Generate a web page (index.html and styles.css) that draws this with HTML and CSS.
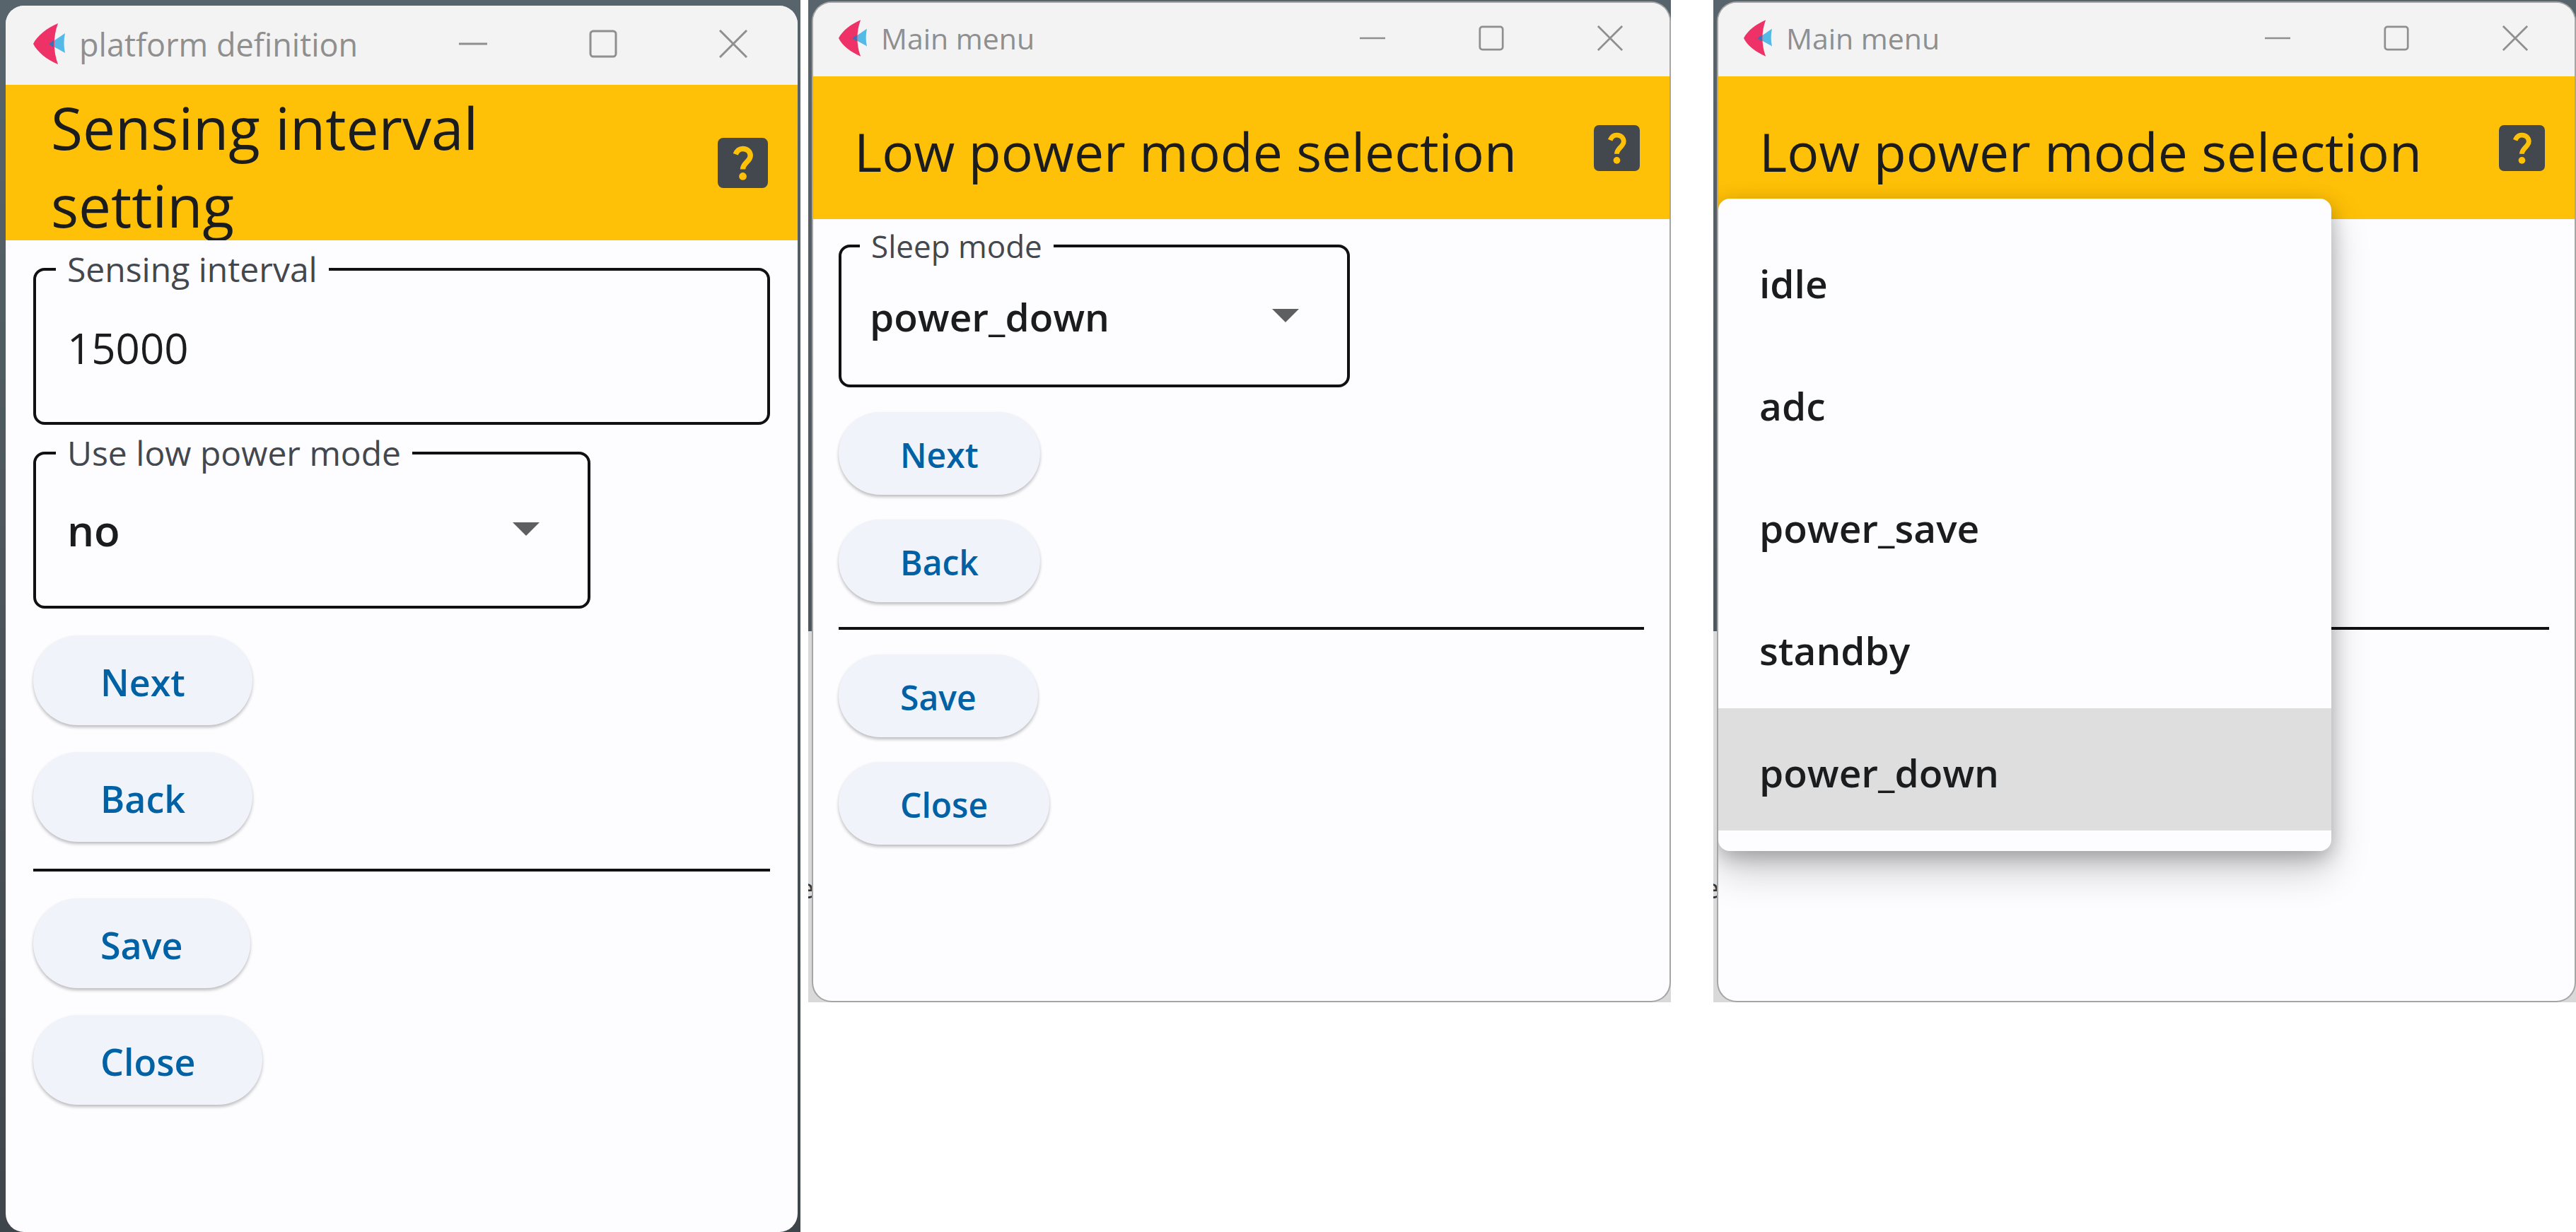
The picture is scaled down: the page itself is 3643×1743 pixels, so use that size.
FILE: index.html
```html
<!DOCTYPE html>
<html lang="en">
<head>
<meta charset="utf-8">
<title>Low power settings</title>
<link rel="stylesheet" href="styles.css">
</head>
<body>
<svg class="sprite" aria-hidden="true">
  <symbol id="logo" viewBox="0 0 45 58">
    <path d="M45 14C39 18 32 23 22 29c10 6 17 9 23 13-2-9-2-19 0-28z" fill="#55b9e8"/>
    <path d="M35 0C19 7 6 17 0 29c6 12 19 22 35 29-7-19-7-39 0-58z" fill="#ee3167"/>
    <path d="M29 24c-3 2-5 3-7 5 2 2 4 3 7 5-1-4-1-6 0-10z" fill="#3a6fb5"/>
  </symbol>
  <symbol id="minimize" viewBox="0 0 40 40"><path d="M0 20h40" stroke="#8f8f8f" stroke-width="3"/></symbol>
  <symbol id="maximize" viewBox="0 0 40 40"><rect x="2" y="2" width="36" height="36" rx="4" fill="none" stroke="#8f8f8f" stroke-width="3"/></symbol>
  <symbol id="close" viewBox="0 0 40 40"><path d="M1 1l38 38M39 1L1 39" stroke="#8f8f8f" stroke-width="3"/></symbol>
  <symbol id="arrow" viewBox="0 0 40 20"><path d="M0 0h40L20 20z" fill="#5e5f61"/></symbol>
  <symbol id="help" viewBox="0 0 18 18">
    <rect width="18" height="18" rx="2" fill="#43474e"/>
    <path d="M6.400 5.900C6.900 4.600 7.900 3.900 9 3.900c1.700 0 2.700 1.200 2.700 2.500 0 2.100-2.700 2.600-2.700 4.900" fill="none" stroke="#ffc107" stroke-width="1.900"/>
    <circle cx="9" cy="13.800" r="1.350" fill="#ffc107"/>
  </symbol>
</svg>
<main class="desktop">
  <section class="backdrop backdrop--tall">
    <div class="window window--large">
      <header class="titlebar">
        <svg class="logo"><use href="#logo"/></svg>
        <span class="caption">platform definition</span>
        <button class="control" aria-label="Minimize"><svg><use href="#minimize"/></svg></button>
        <button class="control" aria-label="Maximize"><svg><use href="#maximize"/></svg></button>
        <button class="control" aria-label="Close window"><svg><use href="#close"/></svg></button>
      </header>
      <div class="appbar">
        <h1 class="heading">Sensing interval setting</h1>
        <button class="help" aria-label="Help"><svg><use href="#help"/></svg></button>
      </div>
      <form class="content">
        <fieldset class="field field--wide">
          <legend><label for="interval">Sensing interval</label></legend>
          <input class="entry" id="interval" type="text" value="15000">
        </fieldset>
        <fieldset class="field">
          <legend><label for="low-power">Use low power mode</label></legend>
          <select class="entry entry--select" id="low-power"><option>no</option><option>yes</option></select>
          <svg class="arrow"><use href="#arrow"/></svg>
        </fieldset>
        <button class="action" type="button">Next</button>
        <button class="action" type="button">Back</button>
        <hr class="divider">
        <button class="action" type="button">Save</button>
        <button class="action" type="button">Close</button>
      </form>
    </div>
  </section>

  <section class="backdrop backdrop--middle">
    <span class="peek" aria-hidden="true">e</span>
    <div class="window">
      <header class="titlebar">
        <svg class="logo"><use href="#logo"/></svg>
        <span class="caption">Main menu</span>
        <button class="control" aria-label="Minimize"><svg><use href="#minimize"/></svg></button>
        <button class="control" aria-label="Maximize"><svg><use href="#maximize"/></svg></button>
        <button class="control" aria-label="Close window"><svg><use href="#close"/></svg></button>
      </header>
      <div class="appbar">
        <h1 class="heading">Low power mode selection</h1>
        <button class="help" aria-label="Help"><svg><use href="#help"/></svg></button>
      </div>
      <form class="content">
        <fieldset class="field">
          <legend><label for="sleep">Sleep mode</label></legend>
          <select class="entry entry--select" id="sleep">
            <option>idle</option><option>adc</option><option>power_save</option><option>standby</option><option selected>power_down</option>
          </select>
          <svg class="arrow"><use href="#arrow"/></svg>
        </fieldset>
        <button class="action" type="button">Next</button>
        <button class="action" type="button">Back</button>
        <hr class="divider">
        <button class="action" type="button">Save</button>
        <button class="action" type="button">Close</button>
      </form>
    </div>
  </section>

  <section class="backdrop backdrop--last">
    <span class="peek" aria-hidden="true">e</span>
    <div class="window">
      <header class="titlebar">
        <svg class="logo"><use href="#logo"/></svg>
        <span class="caption">Main menu</span>
        <button class="control" aria-label="Minimize"><svg><use href="#minimize"/></svg></button>
        <button class="control" aria-label="Maximize"><svg><use href="#maximize"/></svg></button>
        <button class="control" aria-label="Close window"><svg><use href="#close"/></svg></button>
      </header>
      <div class="appbar">
        <h1 class="heading">Low power mode selection</h1>
        <button class="help" aria-label="Help"><svg><use href="#help"/></svg></button>
      </div>
      <div class="content content--covered">
        <hr class="divider">
        <ul class="menu" role="listbox" aria-label="Sleep mode">
          <li class="menu-item" role="option">idle</li>
          <li class="menu-item" role="option">adc</li>
          <li class="menu-item" role="option">power_save</li>
          <li class="menu-item" role="option">standby</li>
          <li class="menu-item menu-item--selected" role="option" aria-selected="true">power_down</li>
        </ul>
      </div>
    </div>
  </section>
</main>
</body>
</html>
```
FILE: styles.css
```css
* {
  box-sizing: border-box;
}

body {
  margin: 0;
  background: #fff;
  color: #1a1c1e;
  font-family: "Open Sans", "Noto Sans", sans-serif;
}

button,
input,
select {
  margin: 0;
  padding: 0;
  border: 0;
  background: none;
  color: inherit;
  font: inherit;
}

.sprite {
  position: absolute;
  width: 0;
  height: 0;
}

.desktop {
  display: grid;
  grid-template-columns: 1132fr 11fr 1220fr 60fr 1220fr;
  align-items: start;
  min-height: 100vh;
}

.backdrop {
  position: relative;
  min-width: 0;
  overflow: hidden;
  padding: 4px 2px 2px 7px;
  background: linear-gradient(#58646b, #4e565e 893px, #d9d9d9 893px);
}

.backdrop--tall {
  display: flex;
  align-self: stretch;
  padding: 8px 4px 0 8px;
  background: linear-gradient(#58646b, #3f464b);
}

.backdrop--middle {
  grid-column: 3;
}

.backdrop--last {
  grid-column: 5;
}

/* Letter of the page behind the window, cut by the window's edge */
.peek {
  position: absolute;
  top: 1230px;
  left: -13px;
  color: #333;
  font-size: 38px;
}

.window {
  --gap: 35px;
  --side: 36px;
  --edge: 66px;
  --inset: 58px;
  --bar: 104px;
  --appbar: 202px;
  --logo: 40px;
  --control: 36px;
  --spread: 132px;
  --field: 202px;
  --rest: 416px;
  --notch: 26px;
  --indent: 40px;
  --button: 117px;
  --pad: 87px;
  --caption: 41px;
  --small: 44px;
  --value: 55px;
  --label: 48px;
  --title: 75px;
  --line: 100px;
  --icon: 65px;
  position: relative;
  overflow: hidden;
  padding-bottom: 221px;
  border-radius: 26px;
  background: #fdfcff;
  box-shadow: 0 0 0 2px #a5a5a5;
}

.window--large {
  --gap: 38px;
  --side: 39px;
  --edge: 71px;
  --inset: 64px;
  --bar: 112px;
  --appbar: 220px;
  --logo: 45px;
  --control: 40px;
  --spread: 144px;
  --field: 222px;
  --rest: 254px;
  --notch: 28px;
  --indent: 44px;
  --button: 127px;
  --pad: 95px;
  --caption: 45px;
  --small: 48px;
  --value: 60px;
  --label: 52px;
  --title: 82px;
  --line: 110px;
  --icon: 71px;
  flex: 1;
  padding-bottom: 0;
  box-shadow: none;
}

.titlebar {
  display: flex;
  align-items: center;
  height: var(--bar);
  padding: 0 var(--edge) 4px var(--side);
  background: #f3f3f3;
}

.logo {
  width: var(--logo);
  height: 58px;
  margin-right: 20px;
}

.caption {
  flex: 1;
  color: #8f8f8f;
  font-size: var(--caption);
  white-space: nowrap;
}

.control {
  display: flex;
  margin-left: var(--spread);
}

.control svg {
  width: var(--control);
  height: var(--control);
}

.caption + .control {
  margin-left: 0;
}

.appbar {
  display: flex;
  align-items: center;
  justify-content: space-between;
  height: var(--appbar);
  overflow: hidden;
  padding: 0 42px 0 var(--inset);
  background: #ffc107;
}

.heading {
  margin: 0;
  padding-top: 10px;
  font-size: var(--title);
  font-weight: 400;
  line-height: var(--line);
}

.window--large .heading {
  width: 75%;
}

.help,
.help svg {
  display: flex;
  width: var(--icon);
  height: var(--icon);
}

.content {
  display: flex;
  flex-direction: column;
  align-items: flex-start;
  gap: var(--gap);
  padding: var(--side);
  padding-bottom: 0;
}

.field {
  position: relative;
  display: block;
  width: calc(100% - var(--rest));
  height: var(--field);
  margin: 0;
  padding: 0;
  border: 4px solid #111;
  border-radius: 16px;
}

.window--large .field--wide {
  width: 100%;
}

legend {
  margin-left: var(--notch);
  padding: 0 16px;
  color: #43474e;
  font-size: var(--small);
  line-height: 4px;
}

.entry {
  display: block;
  width: 100%;
  height: calc(var(--field) - 8px);
  padding: 4px 48px 0 var(--indent);
  font-size: var(--value);
}

.entry--select {
  padding-top: 0;
  appearance: none;
  font-weight: 600;
}

.arrow {
  position: absolute;
  top: 45%;
  right: 68px;
  width: 38px;
  height: 19px;
  pointer-events: none;
}

.action {
  height: var(--button);
  padding: 4px var(--pad) 0;
  border-radius: 64px;
  background: #f0f3fa;
  box-shadow: 0 3px 4px rgba(0, 0, 0, 0.25);
  color: #0061a4;
  font-size: var(--label);
  font-weight: 600;
}

.divider {
  width: 100%;
  height: 4px;
  margin: 0;
  border: 0;
  background: #111;
}

.content--covered {
  min-height: 885px;
  padding-top: 577px;
}

.menu {
  position: absolute;
  top: 277px;
  right: 344px;
  left: 0;
  margin: 0;
  padding: 29px 0;
  border-radius: 16px;
  background: #fdfcff;
  box-shadow: 0 28px 56px rgba(0, 0, 0, 0.2), 0 8px 28px rgba(0, 0, 0, 0.25);
  list-style: none;
}

.menu-item {
  display: flex;
  align-items: center;
  height: 173px;
  padding: 8px 58px 0;
  font-size: var(--value);
  font-weight: 600;
}

.menu-item--selected {
  background: #dededf;
}
```
